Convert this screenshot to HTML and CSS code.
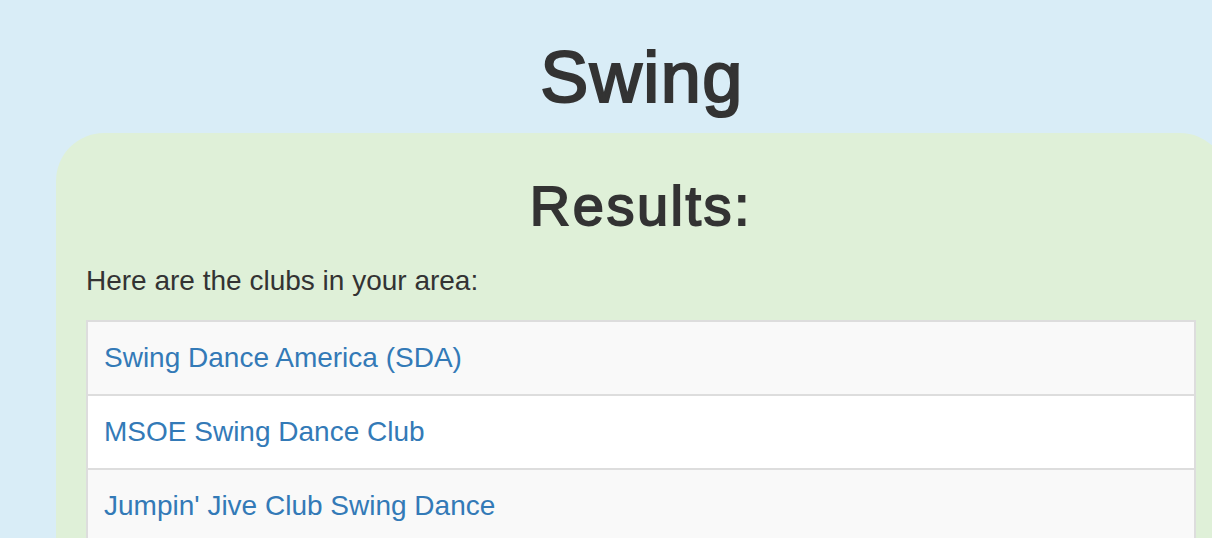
FILE: index.html
```html
<!DOCTYPE html>
<html lang="en">
<head>
<meta charset="utf-8">
<title>Swing</title>
<link rel="stylesheet" href="styles.css">
</head>
<body>
  <div class="container">
    <h1 class="title">Swing</h1>
    <section class="panel">
      <h2 class="panel-title">Results:</h2>
      <p class="intro">Here are the clubs in your area:</p>
      <ul class="club-list">
        <li class="club-item"><a class="club-link" href="#">Swing Dance America (SDA)</a></li>
        <li class="club-item"><a class="club-link" href="#">MSOE Swing Dance Club</a></li>
        <li class="club-item"><a class="club-link" href="#">Jumpin' Jive Club Swing Dance</a></li>
      </ul>
    </section>
  </div>
</body>
</html>
```

FILE: styles.css
```css
html, body {
  margin: 0;
  padding: 0;
}

body {
  background: #d9edf7;
  color: #333333;
  font-family: "Liberation Sans", Arial, Helvetica, sans-serif;
  overflow: hidden;
}

.container {
  margin-left: 56px;
  width: 1172px;
}

.title {
  margin: 0;
  padding-top: 37px;
  font-size: 72px;
  line-height: 80px;
  font-weight: 400;
  letter-spacing: 1.5px;
  text-align: center;
  color: #333333;
  -webkit-text-stroke: 2.2px #333333;
}

.panel {
  margin-top: 16px;
  background: #dff0d8;
  border-radius: 48px;
  padding: 42px 32px 60px 30px;
}

.panel-title {
  margin: 0;
  font-size: 56px;
  line-height: 62px;
  font-weight: 400;
  letter-spacing: 2.5px;
  text-align: center;
  color: #333333;
  -webkit-text-stroke: 1.8px #333333;
}

.intro {
  margin: 24px 0 19px;
  font-size: 28px;
  line-height: 40px;
  color: #333333;
}

.club-list {
  list-style: none;
  margin: 0;
  padding: 0;
}

.club-item {
  border: 2px solid #dddddd;
  padding: 16px 16px;
  font-size: 28px;
  line-height: 40px;
  background: #f9f9f9;
}

.club-item + .club-item {
  border-top: 0;
}

.club-item:nth-child(even) {
  background: #ffffff;
}

.club-link {
  color: #337ab7;
  text-decoration: none;
}
```
